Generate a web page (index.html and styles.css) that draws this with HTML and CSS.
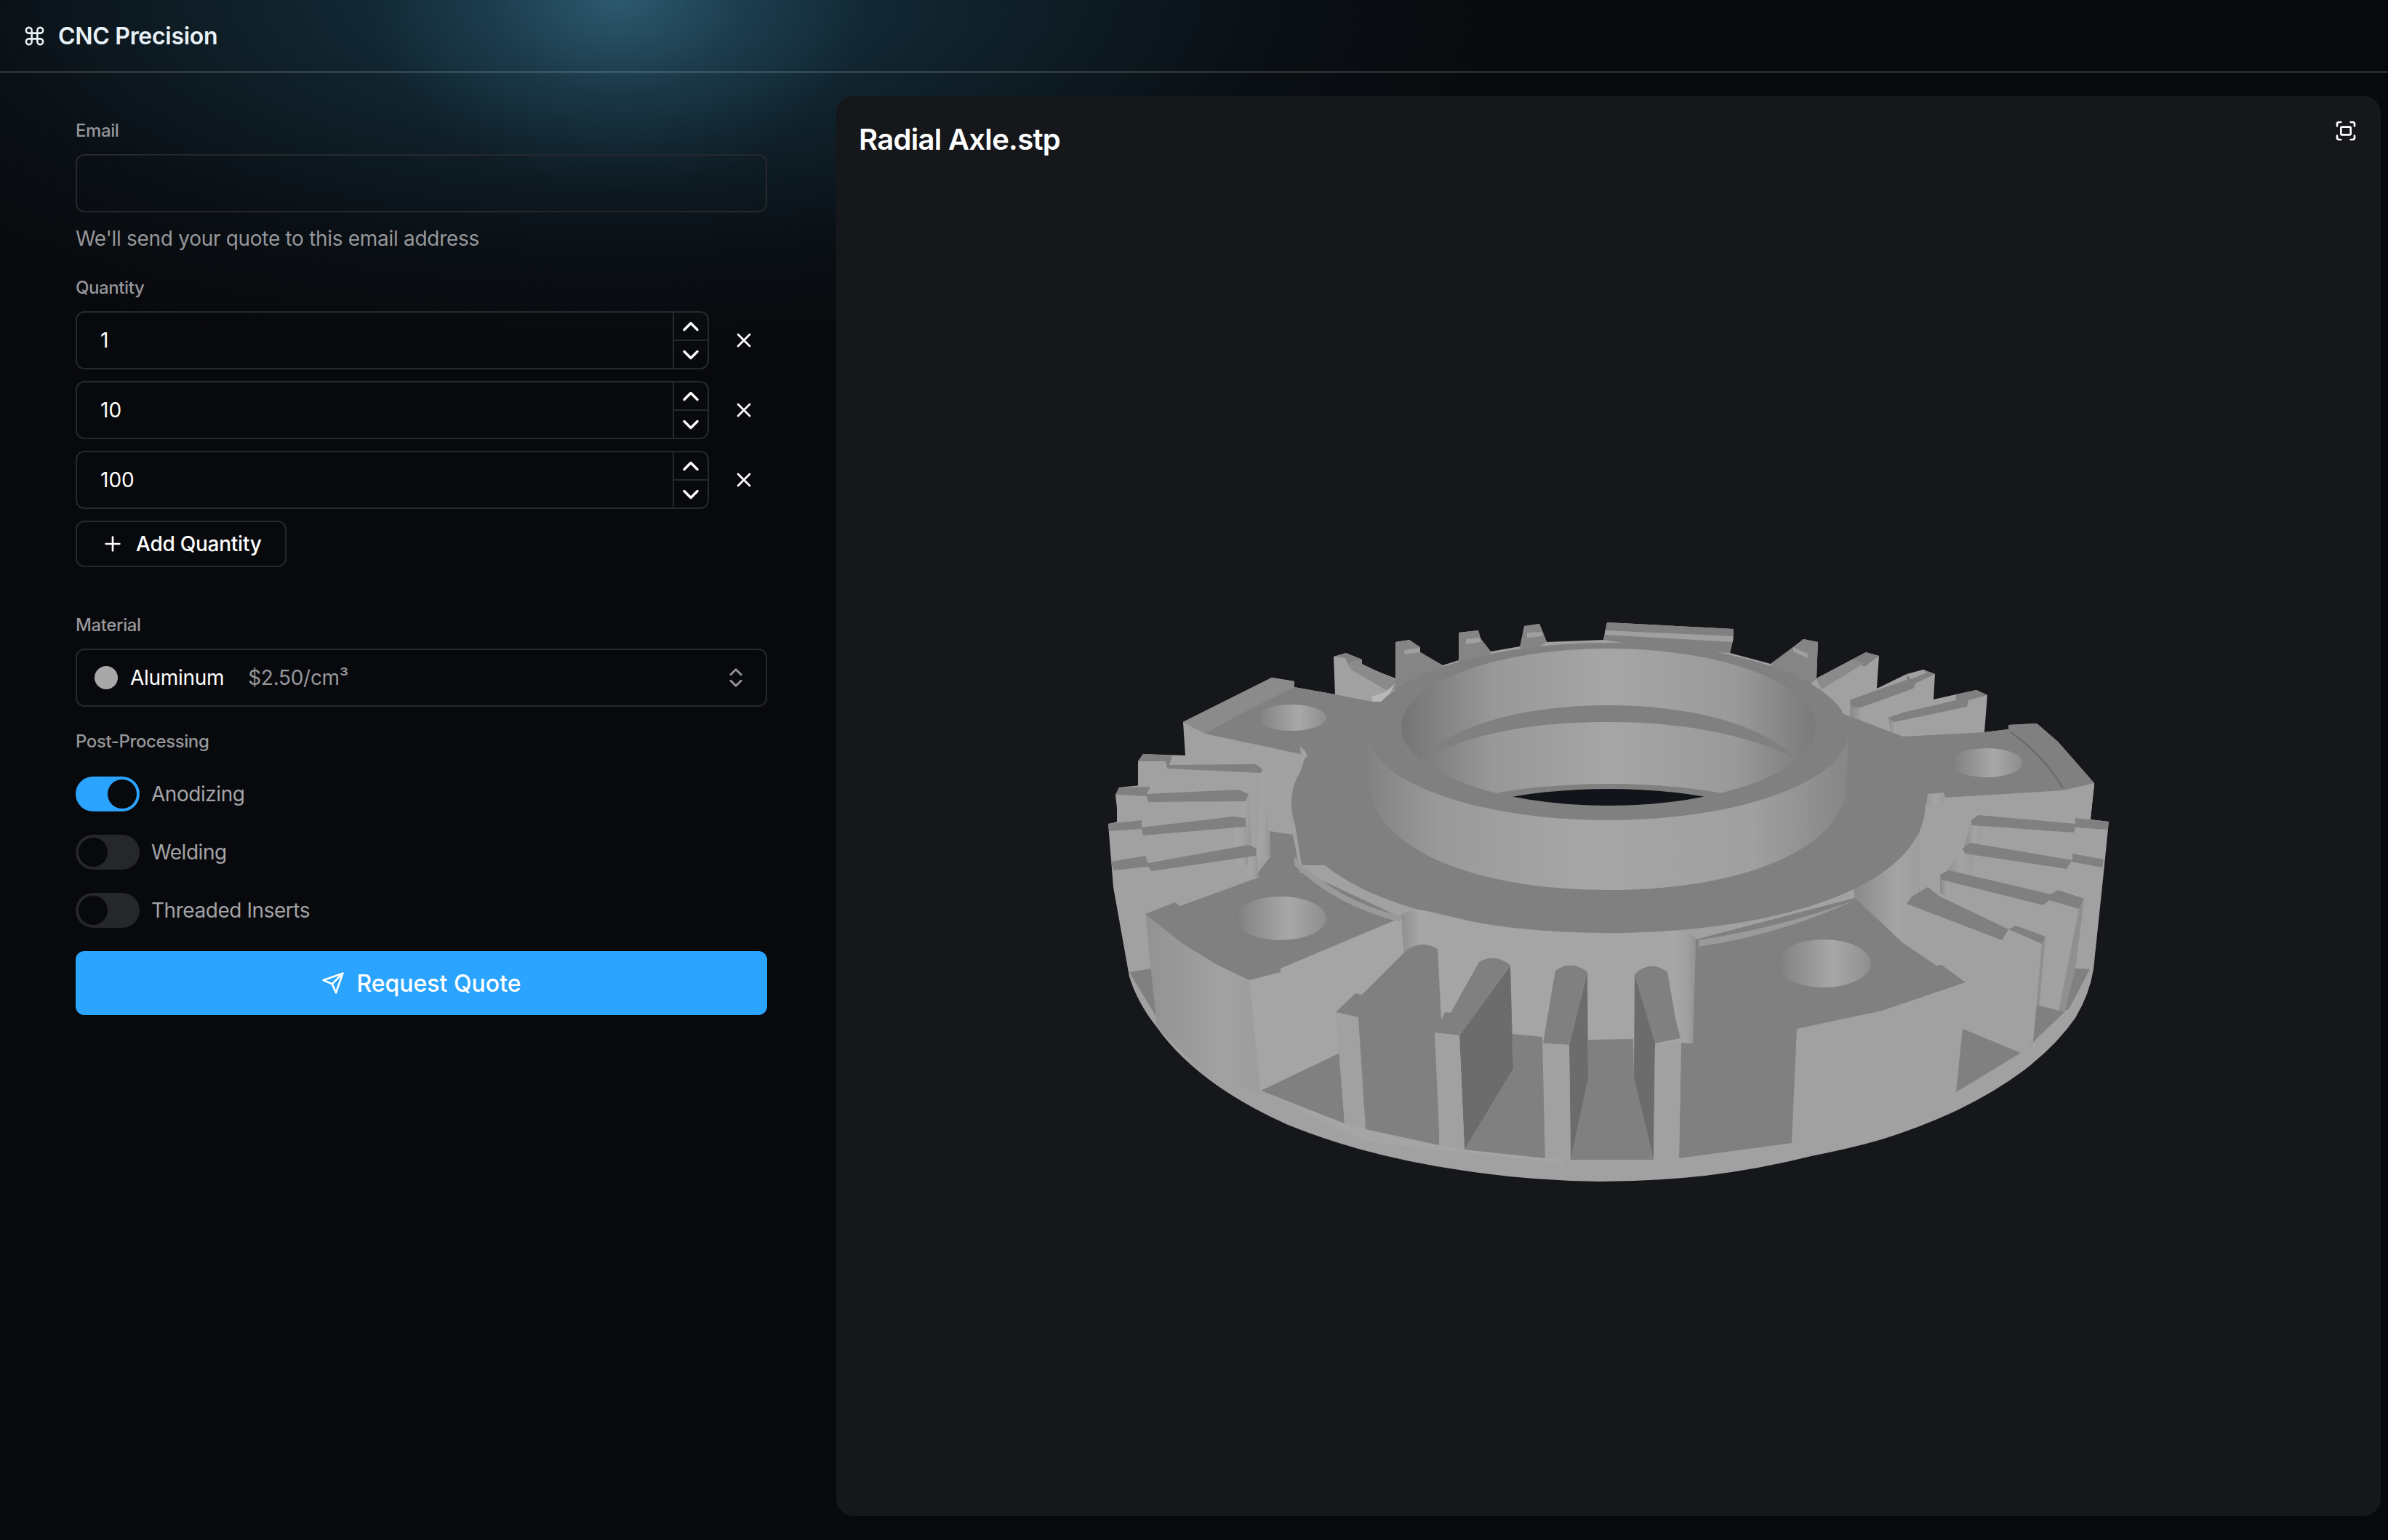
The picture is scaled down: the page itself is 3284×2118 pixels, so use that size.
FILE: index.html
```html
<!DOCTYPE html>
<html lang="en">
<head>
<meta charset="utf-8">
<title>CNC Precision</title>
<link rel="stylesheet" href="styles.css">
</head>
<body>
<header class="topbar">
  <svg class="icon brand-icon" viewBox="0 0 24 24"><path d="M15 6v12a3 3 0 1 0 3-3H6a3 3 0 1 0 3 3V6a3 3 0 1 0-3 3h12a3 3 0 1 0-3-3"/></svg>
  <span class="brand">CNC Precision</span>
</header>
<main class="layout">
  <form class="sidebar">
    <label class="label">Email</label>
    <div class="field"></div>
    <p class="help">We'll send your quote to this email address</p>

    <label class="label label-quantity">Quantity</label>
    <div class="qty-row">
      <div class="field qty-field"><span class="qty-value">1</span>
        <div class="stepper">
          <span class="step"><svg class="icon step-icon" viewBox="0 0 24 24"><path d="m18 15-6-6-6 6"/></svg></span>
          <span class="step"><svg class="icon step-icon" viewBox="0 0 24 24"><path d="m6 9 6 6 6-6"/></svg></span>
        </div>
      </div>
      <svg class="icon remove" viewBox="0 0 24 24"><path d="M18 6 6 18M6 6l12 12"/></svg>
    </div>
    <div class="qty-row">
      <div class="field qty-field"><span class="qty-value">10</span>
        <div class="stepper">
          <span class="step"><svg class="icon step-icon" viewBox="0 0 24 24"><path d="m18 15-6-6-6 6"/></svg></span>
          <span class="step"><svg class="icon step-icon" viewBox="0 0 24 24"><path d="m6 9 6 6 6-6"/></svg></span>
        </div>
      </div>
      <svg class="icon remove" viewBox="0 0 24 24"><path d="M18 6 6 18M6 6l12 12"/></svg>
    </div>
    <div class="qty-row">
      <div class="field qty-field"><span class="qty-value">100</span>
        <div class="stepper">
          <span class="step"><svg class="icon step-icon" viewBox="0 0 24 24"><path d="m18 15-6-6-6 6"/></svg></span>
          <span class="step"><svg class="icon step-icon" viewBox="0 0 24 24"><path d="m6 9 6 6 6-6"/></svg></span>
        </div>
      </div>
      <svg class="icon remove" viewBox="0 0 24 24"><path d="M18 6 6 18M6 6l12 12"/></svg>
    </div>
    <button type="button" class="add-btn">
      <svg class="icon add-icon" viewBox="0 0 24 24"><path d="M5 12h14M12 5v14"/></svg>
      <span>Add Quantity</span>
    </button>

    <label class="label label-material">Material</label>
    <div class="field select">
      <span class="swatch"></span>
      <span class="select-name">Aluminum</span>
      <span class="select-price">$2.50/cm³</span>
      <svg class="icon select-icon" viewBox="0 0 24 24"><path d="m7 15 5 5 5-5M7 9l5-5 5 5"/></svg>
    </div>

    <label class="label label-post">Post-Processing</label>
    <div class="toggles">
      <div class="toggle-row"><span class="toggle on"><span class="thumb"></span></span><span class="toggle-label">Anodizing</span></div>
      <div class="toggle-row"><span class="toggle"><span class="thumb"></span></span><span class="toggle-label">Welding</span></div>
      <div class="toggle-row"><span class="toggle"><span class="thumb"></span></span><span class="toggle-label">Threaded Inserts</span></div>
    </div>

    <button type="button" class="submit">
      <svg class="icon submit-icon" viewBox="0 0 24 24"><path d="m22 2-7 20-4-9-9-4Z"/><path d="M22 2 11 13"/></svg>
      <span>Request Quote</span>
    </button>
  </form>

  <section class="viewer">
    <svg class="model" viewBox="1150 132 2124 1953" aria-hidden="true">
      <defs>
        <linearGradient id="bore"><stop offset="0" stop-color="#747474"/><stop offset=".22" stop-color="#989898"/><stop offset=".5" stop-color="#a6a6a6"/><stop offset=".8" stop-color="#9a9a9a"/><stop offset="1" stop-color="#7a7a7a"/></linearGradient>
        <linearGradient id="hubwall"><stop offset="0" stop-color="#828282"/><stop offset=".15" stop-color="#9a9a9a"/><stop offset=".45" stop-color="#a6a6a6"/><stop offset=".8" stop-color="#a0a0a0"/><stop offset="1" stop-color="#868686"/></linearGradient>
        <linearGradient id="hole"><stop offset="0" stop-color="#7c7c7c"/><stop offset=".15" stop-color="#8a8a8a"/><stop offset=".6" stop-color="#a8a8a8"/><stop offset="1" stop-color="#8e8e8e"/></linearGradient>
        <linearGradient id="post"><stop offset="0" stop-color="#a6a6a6"/><stop offset=".6" stop-color="#a2a2a2"/><stop offset="1" stop-color="#929292"/></linearGradient>
        <linearGradient id="postr"><stop offset="0" stop-color="#8a8a8a"/><stop offset=".6" stop-color="#a4a4a4"/><stop offset="1" stop-color="#9c9c9c"/></linearGradient>
        <linearGradient id="hump"><stop offset="0" stop-color="#8f8f8f"/><stop offset=".55" stop-color="#a8a8a8"/><stop offset="1" stop-color="#a4a4a4"/></linearGradient>
        <linearGradient id="block"><stop offset="0" stop-color="#929292"/><stop offset=".7" stop-color="#a2a2a2"/><stop offset="1" stop-color="#9c9c9c"/></linearGradient>
        <clipPath id="boreclip"><ellipse cx="2212" cy="1000" rx="285" ry="108"/></clipPath>
      </defs>

      <!-- silhouette -->
      <path class="wall" d="M1531 1220L1524 1133 1538 1130 1534 1093 1539 1083 1568 1080 1565 1047 1572 1037 1630 1039 1627 993 1749 932 1780 937 1780 945 1836 955 1834 903 1851 898 1873 907 1873 915 1919 933 1919 883 1938 880 1953 890 1953 897 1984 915 2006 908 2006 870 2033 867 2036 878 2050 896 2096 888 2096 861 2117 858 2122 870 2127 883 2205 880 2210 856 2384 865 2384 877 2379 898 2435 913 2466 890 2480 879 2500 883 2498 933 2547 907 2566 897 2584 902 2581 947 2622 927 2645 921 2661 927 2659 962 2690 955 2718 949 2733 956 2729 1007 2762 1003 2762 997 2801 995 2830 1020 2880 1077 2875 1127 2900 1130 2893 1200 2879 1333A680 330 0 0 1 2854 1400A680 330 0 0 1 2782 1473A680 330 0 0 1 2685 1530A680 330 0 0 1 2588 1567A680 330 0 0 1 2491 1590A680 330 0 0 1 2345 1617A680 330 0 0 1 2200 1625A680 330 0 0 1 2013 1610A680 330 0 0 1 1868 1580A680 330 0 0 1 1771 1547A680 330 0 0 1 1674 1493A680 330 0 0 1 1591 1413A680 330 0 0 1 1553 1343Z"/>

      <!-- back teeth -->
      <g class="top">
        <path d="M2210 856L2384 865 2384 877 2379 898 2300 895 2205 880Z"/>
        <path d="M2096 861L2117 858 2122 870 2127 883 2100 900 2090 890Z" class="tone1"/>
        <path d="M2006 870L2033 867 2036 878 2050 896 2040 930 2006 930Z" class="tone1"/>
        <path d="M1919 883L1938 880 1953 890 1953 897 1984 915 1960 965 1919 960Z" class="tone1"/>
        <path d="M1836 903L1851 898 1873 907 1873 915 1856 918 1850 905Z"/>
        <path d="M1856 920L1873 913 1919 935 1919 948 1908 950Z" class="tone2"/>
        <path d="M2435 913L2466 890 2480 879 2500 883 2498 933 2470 960 2440 930Z" class="tone1"/>
        <path d="M2547 907L2566 897 2584 902 2564 917Z"/>
        <path d="M2498 933L2547 907 2564 912 2505 948Z" class="tone3"/>
      </g>
      <g class="sliver">
        <path d="M2207 867L2383 875 2383 883 2207 873Z"/>
        <path d="M2100 870L2121 869 2121 875 2100 877Z"/>
        <path d="M2016 879L2036 877 2036 883 2016 886Z"/>
        <path d="M1931 894L1953 891 1953 897 1932 900Z"/>
        <path d="M1854 911L1873 907 1873 915 1856 918Z" class="tone3"/>
        <path d="M2466 890L2486 899 2486 905 2466 896Z"/>
      </g>
      <path d="M1886 958L1905 952 1919 940 1892 985Z" fill="#b8b8b8"/>

      <!-- back-right upper fins -->
      <path fill="url(#postr)" d="M2544 963L2556 962 2560 1000 2578 1002 2544 985Z"/>
      <path fill="url(#postr)" d="M2597 987L2610 984 2612 1010 2600 1006Z"/>
      <path class="top" d="M2544 963L2551 960 2622 935 2622 927 2645 921 2661 927 2634 940 2631 947 2559 973 2548 973Z"/>
      <path class="top" d="M2597 987L2617 980 2690 963 2690 955 2718 949 2733 956 2707 963 2705 972 2605 993Z"/>
      <path class="sliver" d="M2622 928L2645 921 2650 925 2628 934Z"/>

      <!-- back-right block top -->
      <path class="top" d="M2530 980L2617 1013 2729 1007 2762 1003 2762 997 2801 995 2830 1020 2880 1077 2837 1087 2675 1097 2673 1090 2651 1092 2640 1180 2500 1200Z"/>
      <path class="line" d="M2765 1007Q2812 1040 2837 1084"/>
      <ellipse cx="2732" cy="1049" rx="49" ry="20" fill="url(#hole)"/>
      <path fill="url(#postr)" d="M2653 1093L2673 1090 2675 1097 2660 1150 2665 1220 2639 1230 2643 1140Z"/>

      <!-- back-left block top -->
      <path class="top" d="M1627 993L1749 932 1780 937 1780 945 1836 955 1887 965 1930 965 1930 1190 1790 1190 1776 1103 1795 1040 1788 1037 1657 1009Z"/>
      <path class="tone3" d="M1627 993L1749 932 1780 937 1780 945 1700 985 1657 1009Z"/>
      <path fill="#a2a2a2" d="M1788 1027L1795 1033 1798 1040 1790 1047Z"/>
      <ellipse cx="1776" cy="987" rx="48" ry="18" fill="url(#hole)"/>

      <!-- left fins -->
      <path fill="url(#post)" d="M1727 1052L1737 1058 1747 1178 1727 1183Z"/>
      <path class="top" d="M1565 1047L1572 1037 1612 1039 1608 1052 1727 1051 1736 1058 1734 1063 1605 1057 1603 1047Z"/>
      <path class="wall" d="M1565 1049L1603 1048 1605 1058 1734 1064 1730 1165 1565 1170Z"/>
      <path fill="url(#post)" d="M1703 1088L1717 1092 1722 1180 1700 1180Z"/>
      <path class="wall" d="M1536 1095L1577 1096 1579 1104 1712 1102 1704 1127 1536 1135Z"/>
      <path class="top" d="M1534 1093L1539 1083 1582 1082 1577 1092 1703 1086 1717 1092 1713 1102 1579 1103 1577 1095Z"/>
      <path fill="url(#post)" d="M1696 1124L1713 1126 1718 1190 1700 1190Z"/>
      <path class="top" d="M1524 1133L1570 1128 1570 1138 1696 1123 1713 1125 1713 1137 1572 1149 1570 1140 1525 1143Z"/>
      <path fill="url(#post)" d="M1717 1162L1728 1167 1730 1207 1715 1205Z"/>
      <path class="top" d="M1528 1185L1575 1177 1579 1187 1717 1162 1728 1167 1727 1177 1584 1198 1579 1192 1531 1197Z"/>

      <!-- left floor -->
      <path class="top" d="M1746 1143L1778 1148 1790 1210 1732 1215 1730 1200 1747 1178Z"/>
      <path class="top" d="M1553 1337L1584 1332 1591 1400Z"/>

      <!-- right fins -->
      <path fill="url(#postr)" d="M2549 1215L2559 1210 2612 1173 2648 1137 2640 1220 2617 1295 2551 1247Z"/>
      <path class="wall" d="M2639 1232L2668 1240 2810 1300 2796 1433 2699 1415 2672 1328 2622 1297 2622 1242Z"/>
      <path class="wall" d="M2640 1108L2840 1090 2880 1080 2862 1240 2640 1232Z"/>
      <path fill="url(#postr)" d="M2711 1130L2725 1133 2722 1163 2700 1168Z"/>
      <path fill="url(#postr)" d="M2699 1167L2714 1172 2712 1208 2670 1208Z"/>
      <path fill="url(#postr)" d="M2668 1203L2685 1210 2683 1238 2668 1228Z"/>
      <path class="top" d="M2711 1128L2721 1121 2854 1133 2854 1125 2900 1130 2898 1141 2854 1138 2852 1145 2711 1135Z"/>
      <path class="top" d="M2699 1167L2709 1159 2850 1183 2850 1174 2893 1182 2891 1193 2848 1185 2842 1195 2702 1174Z"/>
      <path class="top" d="M2668 1203L2680 1197 2820 1230 2830 1224 2866 1236 2859 1250 2818 1238 2810 1245 2670 1210Z"/>
      <path class="top" d="M2629 1233L2651 1220 2668 1233 2762 1278 2772 1273 2813 1288 2808 1298 2762 1278 2753 1293 2622 1243Z"/>
      <path class="shade" d="M2859 1250L2866 1238 2854 1332 2840 1392 2830 1395Z"/>
      <path class="shade" d="M2808 1298L2813 1288 2800 1430 2785 1445 2796 1433Z"/>
      <path class="top" d="M2854 1332L2874 1333 2845 1388 2840 1390Z"/>
      <path class="top" d="M2801 1382L2839 1392 2796 1433Z"/>
      <path class="top" d="M2699 1415L2779 1448 2690 1502Z"/>

      <!-- central deck -->
      <path class="top" d="M2212 927C1970 927 1776 1000 1776 1105 1776 1215 1970 1283 2212 1283 2454 1283 2648 1215 2648 1105 2648 1000 2454 927 2212 927Z"/>

      <!-- wall under the deck front -->
      <path class="frontwall" d="M1718 1348L1927 1258Q1942 1250 1957 1252Q1985 1258 2014 1265Q2070 1278 2121 1280Q2170 1284 2211 1283Q2260 1284 2300 1280Q2320 1279 2332 1290L2328 1435 2125 1450 2150 1600 1878 1570 1734 1500Z"/>
      <path fill="url(#hump)" d="M1927 1258Q1942 1250 1957 1252L1975 1256 1975 1330 1932 1340Z"/>
      <path fill="url(#post)" d="M2300 1280Q2320 1279 2332 1290L2328 1435 2300 1425Z"/>
      <path fill="url(#block)" d="M1575 1257L1625 1297 1674 1327 1718 1348 1732 1500 1674 1493 1591 1413Z"/>

      <!-- front left block top -->
      <path class="top" d="M1575 1257L1616 1241 1623 1246 1730 1207 1795 1200 1927 1262 1761 1332 1761 1337 1718 1348 1674 1327 1625 1297Z"/>
      <ellipse cx="1761" cy="1263" rx="63" ry="30" fill="url(#hole)"/>
      <path class="groove" d="M1780 1178Q1840 1240 1927 1260L1925 1268Q1835 1245 1780 1190Z"/>

      <!-- front pockets and fins -->
      <path class="top" d="M1734 1500L1843 1448 1849 1545Z"/>
      <path class="wall" d="M1837 1392L1868 1399 1878 1553 1849 1545Z"/>
      <path class="top" d="M1837 1392L1864 1366 1873 1368 1936 1305Q1957 1293 1977 1305L1982 1402 1979 1575 1878 1553 1868 1399Z"/>
      <path class="top" d="M2014 1581L2081 1470 2080 1422 2121 1426 2125 1593Z"/>
      <path class="shade2" d="M2077 1328L2081 1470 2014 1581 2007 1424Z"/>
      <path class="top" d="M1973 1420L1987 1392 1995 1393 2034 1323Q2055 1311 2077 1327L2027 1397 2007 1424Z"/>
      <path class="wall" d="M1973 1420L2007 1424 2014 1581 1980 1575Z"/>
      <path class="top" d="M2160 1595L2184 1483 2184 1430 2246 1429 2247 1482 2274 1595Z"/>
      <path class="shade2" d="M2183 1337L2184 1483 2160 1595 2158 1437Z"/>
      <path class="top" d="M2122 1435L2127 1405 2139 1335Q2161 1319 2183 1337L2159 1433 2158 1437Z"/>
      <path class="wall" d="M2122 1435L2158 1437 2160 1595 2125 1593Z"/>
      <path class="shade2" d="M2248 1340L2276 1433 2274 1595 2247 1482Z"/>
      <path class="top" d="M2248 1340Q2270 1319 2293 1337L2305 1405 2311 1428 2276 1435Z"/>

      <!-- front right block -->
      <path class="top" d="M2332 1292L2551 1235 2617 1297 2663 1328 2670 1327 2703 1351 2588 1390 2471 1415 2464 1572 2309 1593 2312 1434 2328 1435Z"/>
      <path class="wall" d="M2276 1436L2312 1434 2309 1593 2274 1595Z"/>
      <ellipse cx="2508" cy="1325" rx="65" ry="33" fill="url(#hole)"/>
      <path class="groove" d="M2336 1293Q2450 1275 2551 1238Q2450 1285 2336 1302Z"/>

      <!-- hub -->
      <path fill="url(#hubwall)" d="M1880 1006L1885 1090C1900 1170 2030 1224 2212 1224 2394 1224 2524 1170 2539 1090L2542 1006Z"/>
      <ellipse class="top" cx="2211" cy="1006" rx="331" ry="122"/>
      <ellipse cx="2212" cy="1000" rx="285" ry="108" fill="url(#bore)"/>
      <path class="top" d="M1953 1047C1990 1000 2090 970 2212 970 2334 970 2430 1000 2471 1045 2410 1012 2320 993 2212 993 2100 993 2010 1012 1953 1047Z"/>
      <g clip-path="url(#boreclip)">
        <ellipse class="top" cx="2212" cy="1138" rx="250" ry="60"/>
        <ellipse class="hollow" cx="2212" cy="1145" rx="230" ry="60"/>
      </g>
    </svg>
    <h1 class="filename">Radial Axle.stp</h1>
    <svg class="icon fit" viewBox="0 0 24 24"><path d="M3 7V5a2 2 0 0 1 2-2h2M17 3h2a2 2 0 0 1 2 2v2M21 17v2a2 2 0 0 1-2 2h-2M7 21H5a2 2 0 0 1-2-2v-2"/><rect x="7" y="8" width="10" height="8" rx="1"/></svg>
  </section>
</main>
</body>
</html>
```

FILE: styles.css
```css
* { box-sizing: border-box; }
html, body { margin: 0; height: 100%; }
body {
  width: 3284px;
  height: 2118px;
  overflow: hidden;
  display: flex;
  flex-direction: column;
  font-family: Inter, "Liberation Sans", sans-serif;
  color: #fff;
  background-color: #08090c;
  background-image:
    radial-gradient(ellipse 340px 260px at 850px 0, rgba(80,145,175,.36) 0, rgba(60,125,155,.17) 50%, rgba(8,9,13,0) 100%),
    radial-gradient(ellipse 1300px 500px at 850px 0, rgba(40,100,130,.52) 0, rgba(32,85,110,.34) 35%, rgba(20,55,72,.14) 70%, rgba(8,9,13,0) 100%);
}
.icon { fill: none; stroke: currentColor; stroke-width: 2; stroke-linecap: round; stroke-linejoin: round; flex: none; display: block; }

.topbar {
  height: 100px;
  flex: none;
  display: flex;
  align-items: center;
  padding-left: 32px;
  gap: 17px;
  border-bottom: 2px solid rgba(255,255,255,.16);
}
.brand-icon { width: 31px; height: 31px; color: #e8f2f8; }
.brand { font-size: 32px; font-weight: 600; color: #e8f2f8; letter-spacing: -.3px; }

.layout { flex: 1; display: flex; min-height: 0; padding: 32px 10px 33px 0; }
.sidebar { width: 1150px; flex: none; padding: 32px 95px 0 104px; display: flex; flex-direction: column; }
.label { display: block; font-size: 24px; line-height: 32px; font-weight: 500; color: #96979b; margin-bottom: 16px; letter-spacing: -.4px; }
.field { height: 80px; border: 2px solid #26282d; border-radius: 12px; flex: none; }
.help { margin: 16px 0 32px; font-size: 28px; line-height: 40px; color: #96979b; letter-spacing: -.3px; }

.qty-row { display: flex; align-items: center; margin-bottom: 16px; }
.qty-field { width: 871px; display: flex; align-items: center; justify-content: space-between; padding-left: 32px; overflow: hidden; }
.qty-value { font-size: 28px; font-weight: 400; }
.stepper { width: 48px; height: 100%; border-left: 2px solid #26282d; display: flex; flex-direction: column; }
.step { flex: 1; display: flex; align-items: center; justify-content: center; }
.step + .step { border-top: 2px solid #26282d; }
.step-icon { width: 36px; height: 36px; stroke-width: 2.3; }
.remove { width: 32px; height: 32px; margin-left: 32px; }

.add-btn {
  width: 290px; height: 64px; padding: 0 0 0 33px;
  display: flex; align-items: center; gap: 16px;
  background: none; border: 2px solid #26282d; border-radius: 12px; color: #fff;
  font: 500 28px Inter, "Liberation Sans", sans-serif;
  letter-spacing: -.25px;
}
.add-icon { width: 32px; height: 32px; }

.label-material { margin-top: 64px; }
.select { display: flex; align-items: center; padding-left: 24px; font-size: 28px; letter-spacing: -.3px; }
.swatch { width: 32px; height: 32px; border-radius: 50%; background: #a8a8a8; flex: none; }
.select-name { margin-left: 17px; }
.select-price { margin-left: 33px; color: #96979b; }
.select-icon { width: 34px; height: 34px; margin-left: auto; margin-right: 24px; color: #96979b; }

.label-post { margin-top: 32px; margin-bottom: 32px; }
.toggles { display: flex; flex-direction: column; gap: 32px; }
.toggle-row { display: flex; align-items: center; gap: 16px; height: 48px; }
.toggle { width: 88px; height: 48px; border-radius: 24px; background: #26272b; padding: 4px; display: flex; }
.toggle.on { background: #2ba4ff; justify-content: flex-end; }
.thumb { width: 40px; height: 40px; border-radius: 50%; background: #08090d; }
.toggle-label { font-size: 28px; color: #a3a3a7; letter-spacing: -.45px; }

.submit {
  margin-top: 32px; height: 88px; width: 100%;
  display: flex; align-items: center; justify-content: center; gap: 16px;
  background: #2ba4ff; border: 0; border-radius: 12px; color: #fff;
  font: 500 32px Inter, "Liberation Sans", sans-serif;
}
.submit-icon { width: 32px; height: 32px; }

.viewer { flex: 1; position: relative; background: #15171b; border-radius: 24px; overflow: hidden; }
.model { position: absolute; inset: 0; width: 100%; height: 100%; }
.filename { position: absolute; left: 31px; top: 36px; margin: 0; font-size: 40px; line-height: 48px; font-weight: 600; color: #fff; letter-spacing: -.7px; }
.fit { position: absolute; right: 32px; top: 32px; width: 32px; height: 32px; }

.wall { fill: #a1a1a1; }
.frontwall { fill: #a5a5a5; }
.top { fill: #808080; }
.top .tone1, .tone1 { fill: #858585; }
.top .tone2, .tone2 { fill: #8a8a8a; }
.top .tone3, .tone3 { fill: #8b8b8b; }
.sliver { fill: #a0a0a0; }
.shade { fill: #8f8f8f; }
.shade2 { fill: #6c6c6c; }
.hollow { fill: #111418; }
.line { fill: none; stroke: #6c6c6c; stroke-width: 2.5; }
.groove { fill: #9a9a9a; }
```
